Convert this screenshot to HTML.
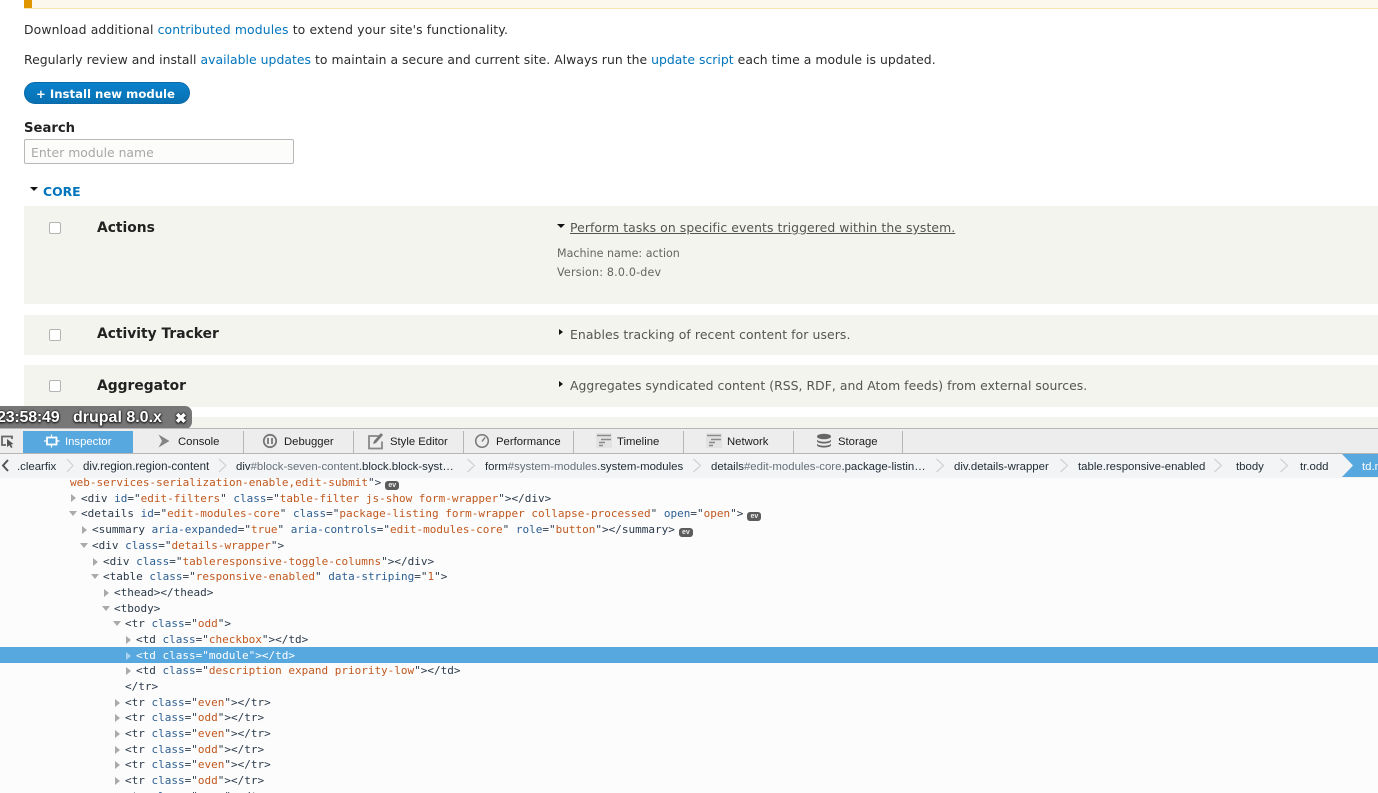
<!DOCTYPE html>
<html><head><meta charset="utf-8"><style>
html,body{margin:0;padding:0;background:#fff;width:1378px;height:793px;overflow:hidden}
#r{position:relative;width:1378px;height:793px;overflow:hidden;font-family:"DejaVu Sans",sans-serif;color:#333}
.a{position:absolute;white-space:nowrap;margin-top:1px}
.b{position:absolute}
.t{font-size:12.4px;line-height:16px;color:#2c2c2c}
.t a,.core{color:#0074bd;text-decoration:none}
.d{font-size:12.4px;line-height:16px;color:#55554f}
.s{font-size:11.1px;line-height:14px;color:#666660}
.h{font-size:13.85px;font-weight:bold;line-height:18px;color:#222}
.cb{position:absolute;left:49px;width:10px;height:10px;background:#fff;border:1px solid #b4b4b4;border-radius:2px}
.tab{font:11.3px/14px "Liberation Sans",sans-serif;color:#1c1c1c;top:434px}
.bc{font:11.4px/14px "Liberation Sans",sans-serif;color:#1f2a33;top:459px}
.bc i{font-style:normal;color:#66707a}
.sep{position:absolute;top:431px;width:1px;height:22px;background:#b6b6b6}
.m{position:absolute;font:11px/16px "DejaVu Sans Mono",monospace;white-space:pre;color:#2b3a4a;margin-top:1px}
.m b{font-weight:normal;color:#2d5f92}
.m u{text-decoration:none;color:#c1581e}
.ev{display:inline-block;width:14px;height:9px;border-radius:3px;background:#5c5c5c;vertical-align:-1px;margin-left:4px;color:#eee;font:bold 7px/9px "Liberation Sans",sans-serif;text-align:center}
.tr{position:absolute;width:0;height:0;border-top:4.5px solid transparent;border-bottom:4.5px solid transparent;border-left:5px solid #aaa;margin-top:1px}
.dn{position:absolute;width:0;height:0;border-left:4.5px solid transparent;border-right:4.5px solid transparent;border-top:5px solid #aaa}
.bk{position:absolute;width:0;height:0;border-left:4px solid transparent;border-right:4px solid transparent;border-top:4px solid #111}
.bk2{position:absolute;width:0;height:0;border-top:3.5px solid transparent;border-bottom:3.5px solid transparent;border-left:4px solid #111}
.ts{font:bold 16px/18px "Liberation Sans",sans-serif;color:#fff;text-shadow:0 0 2px #111,0 1px 2px #111,0 0 1px #111}
</style></head><body><div id="r">

<div class="b" style="left:24px;top:0;width:1354px;height:8px;background:#fdf8ed;border-bottom:1px solid #f9e4b2"></div>
<div class="b" style="left:24px;top:0;width:8px;height:8px;background:#e09600"></div>

<div class="a t" style="left:24px;top:21px;letter-spacing:.13px">Download additional <a>contributed modules</a> to extend your site's functionality.</div>
<div class="a t" style="left:24px;top:51px;letter-spacing:.035px">Regularly review and install <a>available updates</a> to maintain a secure and current site. Always run the <a>update script</a> each time a module is updated.</div>

<div class="b" style="left:24px;top:82px;width:164px;height:20px;border:1px solid #0a6aa8;border-radius:11px;background:linear-gradient(#0a82cc,#0870b2)"></div>
<div class="a" style="left:36px;top:85px;font-size:11.7px;line-height:16px;font-weight:bold;color:#fff">+ Install new module</div>

<div class="a" style="left:24px;top:119px;font-size:13.2px;font-weight:bold;line-height:18px;color:#222">Search</div>
<div class="b" style="left:24px;top:139px;width:268px;height:23px;border:1px solid #b8b8b8;border-radius:2px;background:#fcfcfa"></div>
<div class="a" style="left:31px;top:144px;font-size:12.4px;line-height:16px;color:#a8a8a8">Enter module name</div>

<div class="bk" style="left:30px;top:187px"></div>
<div class="a core" style="left:43px;top:183px;font-size:12.4px;line-height:16px;font-weight:bold">CORE</div>

<div class="b" style="left:24px;top:206px;width:1354px;height:98px;background:#f3f4ee"></div>
<div class="b" style="left:24px;top:315px;width:1354px;height:40px;background:#f3f4ee"></div>
<div class="b" style="left:24px;top:365px;width:1354px;height:42px;background:#f3f4ee"></div>
<div class="b" style="left:24px;top:417px;width:1354px;height:12px;background:#f3f4ee"></div>

<div class="cb" style="top:222px"></div>
<div class="cb" style="top:329px"></div>
<div class="cb" style="top:380px"></div>

<div class="a h" style="left:97px;top:218px">Actions</div>
<div class="a h" style="left:97px;top:324px">Activity Tracker</div>
<div class="a h" style="left:97px;top:376px">Aggregator</div>

<div class="bk" style="left:557px;top:224px"></div>
<div class="a d" style="left:570px;top:219px;text-decoration:underline;letter-spacing:.08px">Perform tasks on specific events triggered within the system.</div>
<div class="a s" style="left:557px;top:246px">Machine name: action</div>
<div class="a s" style="left:557px;top:265px;letter-spacing:.2px">Version: 8.0.0-dev</div>
<div class="bk2" style="left:559px;top:329px"></div>
<div class="a d" style="left:570px;top:326px;letter-spacing:.09px">Enables tracking of recent content for users.</div>
<div class="bk2" style="left:559px;top:381px"></div>
<div class="a d" style="left:570px;top:377px;letter-spacing:.04px">Aggregates syndicated content (RSS, RDF, and Atom feeds) from external sources.</div>

<!-- timestamp label -->
<div class="b" style="left:0;top:406px;width:192px;height:23px;background:#777;border-radius:0 7px 7px 0"></div>
<div class="a ts" style="left:-3px;top:408px;letter-spacing:-.2px">23:58:49</div>
<div class="a ts" style="left:73px;top:408px">drupal 8.0.x</div>
<div class="a ts" style="left:175px;top:408px;font-size:14px">✖</div>

<!-- devtools -->
<div class="b" style="left:0;top:428px;width:1378px;height:25px;background:#ededed;border-top:1px solid #b6b6b6"></div>
<div class="b" style="left:0;top:453px;width:1378px;height:24px;background:#f3f4f6;border-top:1px solid #b6b6b6;border-bottom:1px solid #b6b6b6"></div>
<div class="b" style="left:0;top:478px;width:1378px;height:315px;background:#fcfcfc"></div>

<div class="b" style="left:23px;top:431px;width:110px;height:22px;background:#58a8e0"></div>
<div class="sep" style="left:243px"></div><div class="sep" style="left:353px"></div><div class="sep" style="left:463px"></div><div class="sep" style="left:573px"></div><div class="sep" style="left:683px"></div><div class="sep" style="left:793px"></div><div class="sep" style="left:902px"></div>

<svg class="b" style="left:0;top:428px" width="920" height="26" fill="none">
<path d="M6 17H2V8.500H12V11" stroke="#666" stroke-width="1.800"/>
<path d="M7 11l6.500 5-2.500.5 1.500 2.800-1.500.7-1.500-2.800L7 19z" fill="#555"/>
<path d="M47 9.500h9.500v7H47z" stroke="#fff" stroke-width="1.800"/><path d="M44 13h3M56.500 13h3M51.500 6.500v3M51.500 16.500v3" stroke="#fff" stroke-width="1.200"/>
<path d="M158.500 6.500l11 6.500-11 6.500 3.500-6.500z" fill="#858585"/>
<circle cx="270" cy="13" r="6.200" stroke="#777" stroke-width="1.800"/><path d="M268 10v6M272 10v6" stroke="#777" stroke-width="1.800"/>
<path d="M381 8h-12v12.500h13v-7" stroke="#888" stroke-width="1.800"/><path d="M373 16l1-3 7-8 2 2-7 8z" fill="#777"/>
<circle cx="482" cy="13" r="6.300" stroke="#777" stroke-width="1.500"/><path d="M482 13.500l3-4" stroke="#777" stroke-width="1.400"/>
<rect x="596" y="5" width="16" height="15" fill="#e2e2e2"/><path d="M597 7.500h14M601 11.500h10M599 14.500h6M599 17.500h4" stroke="#8a8a8a" stroke-width="1.600"/>
<rect x="706" y="5" width="16" height="15" fill="#e2e2e2"/><path d="M707 7.500h14M711 11.500h10M709 14.500h6M709 17.500h4" stroke="#8a8a8a" stroke-width="1.600"/>
<ellipse cx="824" cy="8.500" rx="7" ry="2.800" fill="#666"/><path d="M817 11.500c1 3 13 3 14 0v1.800c-1 3-13 3-14 0zM817 15.500c1 3 13 3 14 0v1.800c-1 3-13 3-14 0z" fill="#666"/>
</svg>

<div class="a tab" style="left:65px;color:#fff">Inspector</div>
<div class="a tab" style="left:178px">Console</div>
<div class="a tab" style="left:284px">Debugger</div>
<div class="a tab" style="left:390px">Style Editor</div>
<div class="a tab" style="left:496px">Performance</div>
<div class="a tab" style="left:617px">Timeline</div>
<div class="a tab" style="left:727px">Network</div>
<div class="a tab" style="left:838px">Storage</div>

<svg class="b" style="left:0;top:454px" width="1378" height="23" fill="none">
<path d="M1342 0h36v23h-36l11-11.500z" fill="#58a8e0"/>
<path d="M8 6l-5 5.500 5 5.500" stroke="#555" stroke-width="2"/>
<g stroke="#cfd1d4" stroke-width="1.200">
<path d="M67 5l6 6.500-6 6.500M219 5l7 6.500-7 6.500M467.500 5l7 6.500-7 6.500M693.500 5l7 6.500-7 6.500M936.500 5l7 6.500-7 6.500M1060.500 5l7 6.500-7 6.500M1214.500 5l7 6.500-7 6.500M1280.500 5l7 6.500-7 6.500"/>
</g>
</svg>

<div class="a bc" style="left:17px">.clearfix</div>
<div class="a bc" style="left:83px;font-size:11.55px">div.region.region-content</div>
<div class="a bc" style="left:236px">div<i>#block-seven-content</i>.block.block-syst…</div>
<div class="a bc" style="left:485px">form<i>#system-modules</i>.system-modules</div>
<div class="a bc" style="left:711px">details<i>#edit-modules-core</i>.package-listin…</div>
<div class="a bc" style="left:954px">div.details-wrapper</div>
<div class="a bc" style="left:1078px">table.responsive-enabled</div>
<div class="a bc" style="left:1236px">tbody</div>
<div class="a bc" style="left:1300px">tr.odd</div>
<div class="a bc" style="left:1362px;color:#fff">td.m</div>

<!-- markup -->
<div class="b" style="left:0;top:647px;width:1378px;height:16px;background:#58a8e0"></div>

<div class="m" style="left:70px;top:474px"><u>web-services-serialization-enable,edit-submit</u>"&gt;<span class="ev">ev</span></div>

<div class="tr" style="left:71px;top:493px"></div>
<div class="m" style="left:81px;top:490px">&lt;div <b>id</b>="<u>edit-filters</u>" <b>class</b>="<u>table-filter js-show form-wrapper</u>"&gt;&lt;/div&gt;</div>

<div class="dn" style="left:69px;top:511px"></div>
<div class="m" style="left:81px;top:505px">&lt;details <b>id</b>="<u>edit-modules-core</u>" <b>class</b>="<u>package-listing form-wrapper collapse-processed</u>" <b>open</b>="<u>open</u>"&gt;<span class="ev">ev</span></div>

<div class="tr" style="left:82px;top:525px"></div>
<div class="m" style="left:92px;top:521px">&lt;summary <b>aria-expanded</b>="<u>true</u>" <b>aria-controls</b>="<u>edit-modules-core</u>" <b>role</b>="<u>button</u>"&gt;&lt;/summary&gt;<span class="ev">ev</span></div>

<div class="dn" style="left:80px;top:543px"></div>
<div class="m" style="left:92px;top:537px">&lt;div <b>class</b>="<u>details-wrapper</u>"&gt;</div>

<div class="tr" style="left:93px;top:557px"></div>
<div class="m" style="left:103px;top:553px">&lt;div <b>class</b>="<u>tableresponsive-toggle-columns</u>"&gt;&lt;/div&gt;</div>

<div class="dn" style="left:91px;top:574px"></div>
<div class="m" style="left:103px;top:568px">&lt;table <b>class</b>="<u>responsive-enabled</u>" <b>data-striping</b>="<u>1</u>"&gt;</div>

<div class="tr" style="left:104px;top:588px"></div>
<div class="m" style="left:114px;top:584px">&lt;thead&gt;&lt;/thead&gt;</div>

<div class="dn" style="left:102px;top:606px"></div>
<div class="m" style="left:114px;top:600px">&lt;tbody&gt;</div>

<div class="dn" style="left:113px;top:621px"></div>
<div class="m" style="left:125px;top:615px">&lt;tr <b>class</b>="<u>odd</u>"&gt;</div>

<div class="tr" style="left:126px;top:635px"></div>
<div class="m" style="left:136px;top:631px">&lt;td <b>class</b>="<u>checkbox</u>"&gt;&lt;/td&gt;</div>

<div class="tr" style="left:126px;top:651px;border-left-color:#a9d3f0"></div>
<div class="m" style="left:136px;top:647px;color:#fff">&lt;td class="module"&gt;&lt;/td&gt;</div>

<div class="tr" style="left:126px;top:666px"></div>
<div class="m" style="left:136px;top:662px">&lt;td <b>class</b>="<u>description expand priority-low</u>"&gt;&lt;/td&gt;</div>

<div class="m" style="left:125px;top:678px">&lt;/tr&gt;</div>

<div class="tr" style="left:115px;top:698px"></div>
<div class="m" style="left:125px;top:694px">&lt;tr <b>class</b>="<u>even</u>"&gt;&lt;/tr&gt;</div>
<div class="tr" style="left:115px;top:713px"></div>
<div class="m" style="left:125px;top:709px">&lt;tr <b>class</b>="<u>odd</u>"&gt;&lt;/tr&gt;</div>
<div class="tr" style="left:115px;top:729px"></div>
<div class="m" style="left:125px;top:725px">&lt;tr <b>class</b>="<u>even</u>"&gt;&lt;/tr&gt;</div>
<div class="tr" style="left:115px;top:745px"></div>
<div class="m" style="left:125px;top:741px">&lt;tr <b>class</b>="<u>odd</u>"&gt;&lt;/tr&gt;</div>
<div class="tr" style="left:115px;top:760px"></div>
<div class="m" style="left:125px;top:756px">&lt;tr <b>class</b>="<u>even</u>"&gt;&lt;/tr&gt;</div>
<div class="tr" style="left:115px;top:776px"></div>
<div class="m" style="left:125px;top:772px">&lt;tr <b>class</b>="<u>odd</u>"&gt;&lt;/tr&gt;</div>
<div class="tr" style="left:115px;top:792px"></div>
<div class="m" style="left:125px;top:788px">&lt;tr <b>class</b>="<u>even</u>"&gt;&lt;/tr&gt;</div>

</div></body></html>
